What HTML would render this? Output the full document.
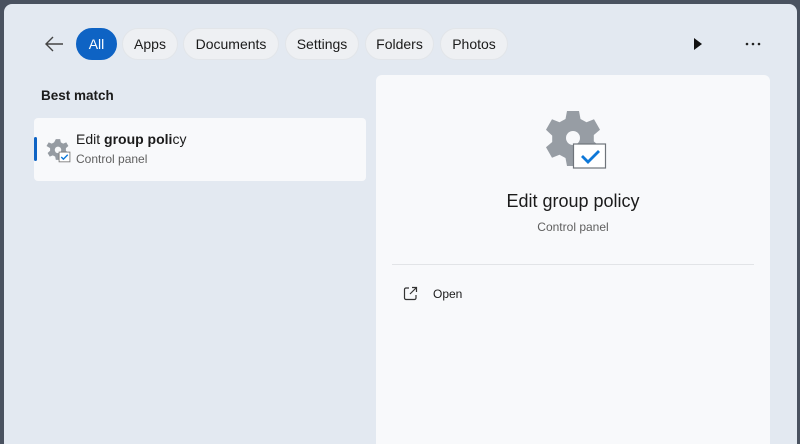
<!DOCTYPE html>
<html><head><meta charset="utf-8"><style>
*{margin:0;padding:0;box-sizing:border-box}
html,body{width:800px;height:444px;overflow:hidden}
body{background:#4a5260;font-family:"Liberation Sans",sans-serif;position:relative}
.win{position:absolute;left:4px;top:4px;width:793px;height:440px;background:#e3e9f1;border-radius:8px 8px 0 0}
.pill{position:absolute;top:28px;height:32px;border-radius:16px;background:#eef0f3;border:1px solid #e2e5e9;font-size:14px;color:#1b1b1b;line-height:30px;text-align:center}
.abs{position:absolute}
</style></head><body>
<div class="win"></div>
<svg class="abs" style="left:43px;top:34px" width="22" height="20" viewBox="0 0 22 20"><path d="M20 10H3M10 3L3 10L10 17" stroke="#444" stroke-width="1.4" fill="none"/></svg>
<div class="pill" style="left:76px;width:41px;background:#0e63c4;border-color:#0e63c4;color:#fff">All</div>
<div class="pill" style="left:122px;width:56px">Apps</div>
<div class="pill" style="left:183px;width:96px">Documents</div>
<div class="pill" style="left:285px;width:74px">Settings</div>
<div class="pill" style="left:365px;width:69px">Folders</div>
<div class="pill" style="left:440px;width:68px">Photos</div>
<svg class="abs" style="left:692px;top:37px" width="12" height="14"><path d="M2 1L10 7L2 13Z" fill="#111"/></svg>
<svg class="abs" style="left:745px;top:42px" width="18" height="4"><circle cx="2" cy="2" r="1.3" fill="#222"/><circle cx="8" cy="2" r="1.3" fill="#222"/><circle cx="14" cy="2" r="1.3" fill="#222"/></svg>
<div class="abs" style="left:41px;top:88px;font-size:13.5px;font-weight:bold;color:#1b1b1b">Best match</div>
<div class="abs" style="left:34px;top:118px;width:332px;height:63px;background:#f8f9fb;border-radius:4px"></div>
<div class="abs" style="left:34px;top:137px;width:3px;height:24px;background:#0e63c4;border-radius:2px"></div>
<svg class="abs" style="left:45px;top:138px" width="26" height="26" viewBox="0 0 24 24"><path d="M10 1h4l.6 3 2.2 1.2 2.8-1.2 2 3.4-2.3 2v2.4l2.3 2-2 3.4-2.8-1.2-2.2 1.2-.6 3h-4l-.6-3-2.2-1.2-2.8 1.2-2-3.4 2.3-2V9.4L1.4 7.4l2-3.4 2.8 1.2L8.4 4z" fill="#959ba2"/><circle cx="12" cy="11" r="3" fill="#f8f9fb"/><rect x="13" y="13" width="10" height="9" fill="#fff" stroke="#777" stroke-width=".8"/><path d="M15 17.5l2 2 4-4" stroke="#0e78d8" stroke-width="1.3" fill="none"/></svg>
<div class="abs" style="left:76px;top:131px;font-size:14px;color:#1b1b1b">Edit <b>group poli</b>cy</div>
<div class="abs" style="left:76px;top:152px;font-size:12px;color:#5f5f5f">Control panel</div>
<div class="abs" style="left:376px;top:75px;width:394px;height:380px;background:#f8f9fb;border-radius:6px"></div>
<svg class="abs" style="left:543px;top:110px" width="66" height="60" viewBox="0 0 66 60"><path d="M24 1h12l1.5 8 6 3.3 7.5-3 6 10.4-6.2 5.3v6.4l6.2 5.3-6 10.4-7.5-3-6 3.3L36 56H24l-1.5-8-6-3.3-7.5 3-6-10.4 6.2-5.3v-6.4L3 19.7l6-10.4 7.5 3 6-3.3z" fill="#979da4"/><circle cx="30" cy="28" r="7" fill="#f8f9fb"/><rect x="30.5" y="34" width="32" height="24" fill="#fff" stroke="#6f747a" stroke-width="1.2"/><path d="M39 46l6 6 11-11" stroke="#0e78d8" stroke-width="2.8" fill="none"/></svg>
<div class="abs" style="left:376px;top:191px;width:394px;text-align:center;font-size:18px;color:#1b1b1b">Edit group policy</div>
<div class="abs" style="left:376px;top:220px;width:394px;text-align:center;font-size:12px;color:#5f5f5f">Control panel</div>
<div class="abs" style="left:392px;top:264px;width:362px;height:1px;background:#e2e4e7"></div>
<svg class="abs" style="left:403px;top:286px" width="15" height="15" viewBox="0 0 15 15"><path d="M6 2H3a1.5 1.5 0 0 0-1.5 1.5v8.5A1.5 1.5 0 0 0 3 13.5h8.5A1.5 1.5 0 0 0 13 12V9M9 1.5h4.5V6M13.5 1.5L7 8" stroke="#333" stroke-width="1.2" fill="none"/></svg>
<div class="abs" style="left:433px;top:287px;font-size:12px;color:#1b1b1b">Open</div>
</body></html>
